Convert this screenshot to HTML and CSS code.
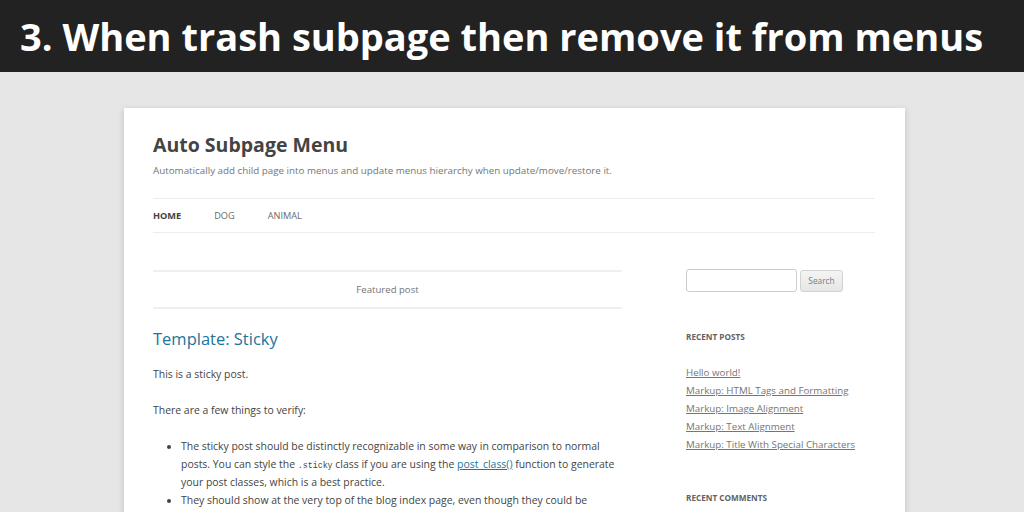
FILE: index.html
```html
<!DOCTYPE html>
<html>
<head>
<meta charset="utf-8">
<link rel="stylesheet" href="styles.css">
</head>
<body>
<header class="banner">
  <h1 class="banner-title">3. When trash subpage then remove it from menus</h1>
</header>
<div class="page">
  <header class="site-header">
    <h2 class="site-title">Auto Subpage Menu</h2>
    <p class="site-desc">Automatically add child page into menus and update menus hierarchy when update/move/restore it.</p>
    <nav class="main-nav">
      <a class="nav-item current">HOME</a>
      <a class="nav-item">DOG</a>
      <a class="nav-item">ANIMAL</a>
    </nav>
  </header>
  <div class="main">
    <div class="content">
      <div class="featured">Featured post</div>
      <h3 class="entry-title">Template: Sticky</h3>
      <p class="para">This is a sticky post.</p>
      <p class="para">There are a few things to verify:</p>
      <ul class="list">
        <li>The sticky post should be distinctly recognizable in some way in comparison to normal posts. You can style the <code>.sticky</code> class if you are using the <a class="link">post_class()</a> function to generate your post classes, which is a best practice.</li>
        <li>They should show at the very top of the blog index page, even though they could be several posts back chronologically.</li>
      </ul>
    </div>
    <aside class="sidebar">
      <form class="search">
        <input class="search-input" type="text">
        <button class="search-btn" type="button">Search</button>
      </form>
      <h4 class="widget-title">Recent Posts</h4>
      <ul class="recent">
        <li><a>Hello world!</a></li>
        <li><a>Markup: HTML Tags and Formatting</a></li>
        <li><a>Markup: Image Alignment</a></li>
        <li><a>Markup: Text Alignment</a></li>
        <li><a>Markup: Title With Special Characters</a></li>
      </ul>
      <h4 class="widget-title comments">Recent Comments</h4>
    </aside>
  </div>
</div>
</body>
</html>
```
FILE: styles.css
```css
html, body {
  margin: 0;
  padding: 0;
  height: 512px;
  overflow: hidden;
}
body {
  background: #e6e6e6;
  font-family: "Open Sans", "Liberation Sans", sans-serif;
  color: #444;
}
.banner {
  background: #222222;
  height: 72px;
  display: flex;
  align-items: center;
  padding-left: 20px;
}
.banner-title {
  margin: 0;
  color: #fff;
  font-size: 38px;
  font-weight: 700;
  line-height: 1;
  letter-spacing: 0;
  white-space: nowrap;
}
.page {
  background: #fff;
  width: 722px;
  margin: 36px 0 0 124px;
  padding: 25px 30px 40px 29px;
  box-shadow: 0 2px 6px rgba(100, 100, 100, 0.3);
  height: 600px;
}
.site-title {
  margin: 0;
  font-size: 19.5px;
  line-height: 24px;
  font-weight: 700;
  color: #444;
}
.site-desc {
  margin: 5px 0 0;
  font-size: 9.8px;
  line-height: 18px;
  color: #757575;
}
.main-nav {
  margin-top: 18px;
  border-top: 1px solid #ededed;
  border-bottom: 1px solid #ededed;
  display: flex;
  gap: 33px;
  height: 33px;
  align-items: center;
}
.nav-item {
  font-size: 9.2px;
  color: #6a6a6a;
  text-transform: uppercase;
}
.nav-item.current {
  font-weight: 700;
  color: #444;
}
.main {
  display: flex;
  gap: 64px;
}
.content {
  width: 469px;
}
.featured {
  margin-top: 37px;
  border-top: 2px solid #efefef;
  border-bottom: 2px solid #efefef;
  height: 35px;
  line-height: 35px;
  text-align: center;
  font-size: 9.6px;
  color: #757575;
}
.entry-title {
  margin: 18px 0 0;
  font-size: 16.5px;
  line-height: 24px;
  font-weight: 400;
  color: #21759b;
}
.para {
  margin: 14px 0 0;
  font-size: 10.45px;
  line-height: 18px;
  color: #444;
}
.para + .para {
  margin-top: 18px;
}
.list {
  margin: 18px 0 0;
  padding-left: 28px;
  font-size: 10.45px;
  line-height: 18px;
  color: #444;
}
.list code {
  font-family: "Liberation Mono", "DejaVu Sans Mono", monospace;
  font-size: 8.3px;
  line-height: 1;
}
.link {
  color: #21759b;
  text-decoration: underline;
}
.sidebar {
  width: 188px;
}
.search {
  margin-top: 36px;
  display: flex;
  align-items: center;
  gap: 3px;
}
.search-input {
  width: 111px;
  height: 23px;
  box-sizing: border-box;
  border: 1px solid #ccc;
  border-radius: 3px;
  margin: 0;
  padding: 0;
  background: #fff;
}
.search-btn {
  width: 43px;
  height: 22px;
  box-sizing: border-box;
  border: 1px solid #d2d2d2;
  border-radius: 3px;
  background: linear-gradient(#f4f4f4, #e6e6e6);
  font-family: "Open Sans", "Liberation Sans", sans-serif;
  font-size: 8.3px;
  color: #7c7c7c;
  padding: 0;
  margin: 0;
}
.widget-title {
  margin: 36px 0 0;
  font-size: 8.2px;
  line-height: 18px;
  font-weight: 700;
  text-transform: uppercase;
  color: #636363;
}
.recent {
  list-style: none;
  margin: 18px 0 0;
  padding: 0;
  font-size: 9.75px;
  line-height: 18px;
}
.recent a {
  color: #757575;
  text-decoration: underline;
}
.widget-title.comments {
  margin-top: 35px;
}
```
